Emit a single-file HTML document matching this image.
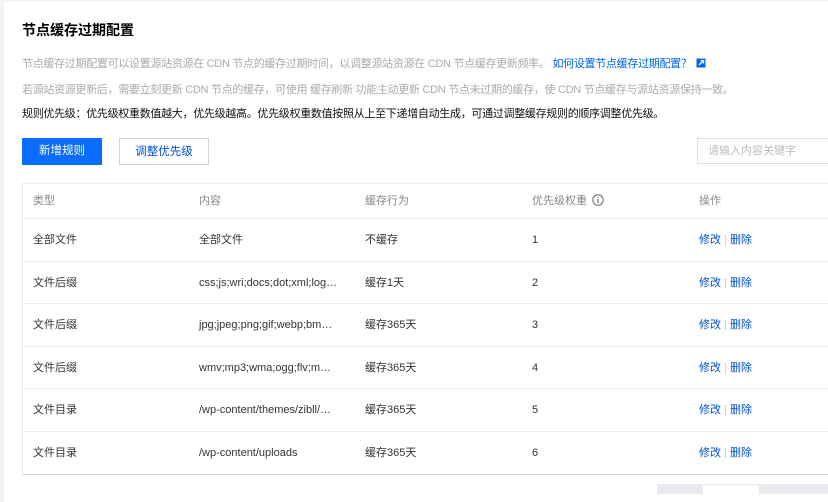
<!DOCTYPE html><html><head><meta charset="utf-8"><style>
body{margin:0;width:828px;height:491px;overflow:hidden;background:#f2f3f5;font-family:"Liberation Sans","Noto Sans CJK SC",sans-serif;font-size:11px;color:#000}
.card{position:absolute;left:4px;top:2px;width:830px;height:500px;background:#fff}
.a{position:absolute;white-space:nowrap}
.p{letter-spacing:-0.3px}
.g{color:#aaa}
.btn{position:absolute;top:138px;height:27px;line-height:27px;text-align:center;box-sizing:border-box;font-size:11.5px}
.tbl{position:absolute;left:22px;top:183px;width:820px;border-left:1px solid #e5e8ee;border-bottom:1px solid #d5d9e0}
.r{height:42.6px;border-top:1px solid #e9ebf0;position:relative;box-sizing:border-box}
.r span{position:absolute;top:0;line-height:42px;white-space:nowrap;color:#333}
.h{height:35px;border-top:1px solid #eceef2}.h span{line-height:34px;color:#888}
.lk{color:#0052d9}
</style></head><body><div class="card"></div>
<div class="a" style="left:22px;top:20px;font-size:14px;font-weight:bold">节点缓存过期配置</div>
<div class="a g p" style="left:22px;top:55px">节点缓存过期配置可以设置源站资源在 CDN 节点的缓存过期时间，以调整源站资源在 CDN 节点缓存更新频率。 <span style="color:#0066ee">如何设置节点缓存过期配置？</span> <svg width="10" height="10" viewBox="0 0 10 10" style="vertical-align:-1px;margin-left:2px"><rect x="0.5" y="0.5" width="9" height="9" fill="#0066ee"/><path d="M3 7 L7.5 2.5 M4.5 2.5 H7.5 V5.5" stroke="#fff" stroke-width="1.3" fill="none"/></svg></div>
<div class="a g p" style="left:22px;top:81px">若源站资源更新后，需要立刻更新 CDN 节点的缓存，可使用 缓存刷新 功能主动更新 CDN 节点未过期的缓存，使 CDN 节点缓存与源站资源保持一致。</div>
<div class="a p" style="left:22px;top:105px;color:#111">规则优先级：优先级权重数值越大，优先级越高。优先级权重数值按照从上至下递增自动生成，可通过调整缓存规则的顺序调整优先级。</div>
<div class="btn" style="left:22px;width:80px;background:#0a6cff;color:#fff">新增规则</div>
<div class="btn" style="left:119px;width:90px;border:1px solid #cfd5de;color:#0052d9">调整优先级</div>
<div class="btn" style="left:697px;width:140px;border:1px solid #dcdfe6;color:#bbb;text-align:left;padding-left:10px;height:26px;line-height:24px;font-size:11px">请输入内容关键字</div>
<div class="tbl">
<div class="r h"><span style="left:10px">类型</span><span style="left:176px">内容</span><span style="left:342px">缓存行为</span><span style="left:509px">优先级权重 <svg width="12" height="12" viewBox="0 0 12 12" style="vertical-align:-2px;margin-left:2px"><circle cx="6" cy="6" r="5.2" fill="none" stroke="#777" stroke-width="1.1"/><path d="M6 5v4M6 3v1" stroke="#777" stroke-width="1.3"/></svg></span><span style="left:676px">操作</span></div>
<div class="r"><span style="left:10px">全部文件</span><span style="left:176px">全部文件</span><span style="left:342px">不缓存</span><span style="left:509px">1</span><span style="left:676px"><b class="lk" style="font-weight:normal">修改</b> <span style="position:static;color:#ccc">|</span> <b class="lk" style="font-weight:normal">删除</b></span></div>
<div class="r"><span style="left:10px">文件后缀</span><span style="left:176px">css;js;wri;docs;dot;xml;log…</span><span style="left:342px">缓存1天</span><span style="left:509px">2</span><span style="left:676px"><b class="lk" style="font-weight:normal">修改</b> <span style="position:static;color:#ccc">|</span> <b class="lk" style="font-weight:normal">删除</b></span></div>
<div class="r"><span style="left:10px">文件后缀</span><span style="left:176px">jpg;jpeg;png;gif;webp;bm…</span><span style="left:342px">缓存365天</span><span style="left:509px">3</span><span style="left:676px"><b class="lk" style="font-weight:normal">修改</b> <span style="position:static;color:#ccc">|</span> <b class="lk" style="font-weight:normal">删除</b></span></div>
<div class="r"><span style="left:10px">文件后缀</span><span style="left:176px">wmv;mp3;wma;ogg;flv;m…</span><span style="left:342px">缓存365天</span><span style="left:509px">4</span><span style="left:676px"><b class="lk" style="font-weight:normal">修改</b> <span style="position:static;color:#ccc">|</span> <b class="lk" style="font-weight:normal">删除</b></span></div>
<div class="r"><span style="left:10px">文件目录</span><span style="left:176px">/wp-content/themes/zibll/…</span><span style="left:342px">缓存365天</span><span style="left:509px">5</span><span style="left:676px"><b class="lk" style="font-weight:normal">修改</b> <span style="position:static;color:#ccc">|</span> <b class="lk" style="font-weight:normal">删除</b></span></div>
<div class="r"><span style="left:10px">文件目录</span><span style="left:176px">/wp-content/uploads</span><span style="left:342px">缓存365天</span><span style="left:509px">6</span><span style="left:676px"><b class="lk" style="font-weight:normal">修改</b> <span style="position:static;color:#ccc">|</span> <b class="lk" style="font-weight:normal">删除</b></span></div>
</div>
<div class="a" style="left:657px;top:484px;width:180px;height:10px;background:#e8eaef"></div>
<div class="a" style="left:703px;top:485px;width:56px;height:10px;background:#fff"></div>
</body></html>
